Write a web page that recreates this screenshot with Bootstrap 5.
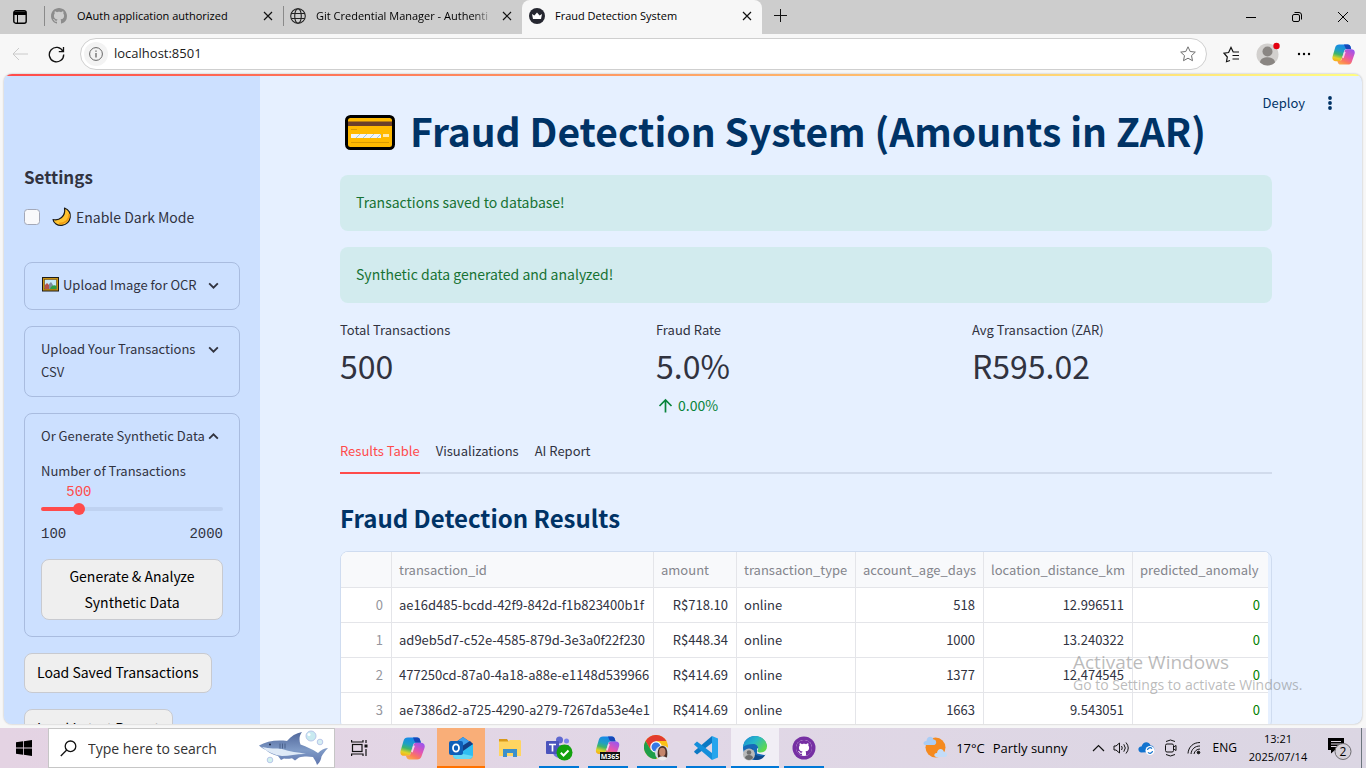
<!DOCTYPE html>
<html lang="en">
<head>
<meta charset="utf-8">
<meta name="viewport" content="width=device-width, initial-scale=1">
<title>Fraud Detection System</title>
<link href="https://cdn.jsdelivr.net/npm/bootstrap@5.3.0/dist/css/bootstrap.min.css" rel="stylesheet">
<style>
  :root { --ui: "Open Sans", "Noto Sans", sans-serif; --app: "Noto Sans CJK SC", sans-serif; --ink: #31333f; --navy: #003366; --coral: #ff4b4b; }
  body { font-family: var(--ui); background: #f7f7f7; color: #000; }
  button { font-family: inherit; }
  .plain-btn { border: 0; background: none; padding: 0; color: inherit; display: inline-flex; align-items: center; justify-content: center; }
  svg { display: block; flex: none; }

  /* browser tabs */
  .tab-strip { height: 34px; background: #cdcdcd; font-size: 11px; line-height: 32px; }
  .tab-menu { width: 44px; padding-right: 4px; }
  .browser-tab { width: 239px; height: 32px; padding: 0 10px 0 7px; }
  .browser-tab .tab-title { flex: 1; overflow: hidden; white-space: nowrap; margin-left: 10px; }
  .tab-fade { -webkit-mask-image: linear-gradient(90deg, #000 88%, transparent); mask-image: linear-gradient(90deg, #000 88%, transparent); }
  .tab-idle { background: linear-gradient(#8a8a8a, #8a8a8a) left center / 1px 20px no-repeat; }
  .tab-current { width: 240px; height: 34px; background: #f7f7f7; border-radius: 8px 8px 0 0; padding-bottom: 2px; }
  .win-btn { width: 46px; height: 34px; }

  /* address bar */
  .tool-row { height: 40px; padding: 0 11px 0 2px; }
  .nav-btn { width: 36px; height: 36px; }
  .url-box { height: 32px; border: 1px solid #cfcfcf; border-radius: 16px; background: #fff; padding: 0 10px 0 3px; margin-left: 6px; }
  .url-info { width: 24px; height: 24px; border-radius: 50%; background: #f3f3f3; }
  .url-box input { border: 0; outline: 0; font-size: 13px; color: #1b1b1b; background: none; min-width: 0; padding: 0 0 0 6px; }

  /* page frame */
  .page-frame { margin: 0 4px 4px; border-radius: 8px; overflow: hidden; background: #e6f0ff; font-family: var(--app); color: var(--ink); font-size: 14px; line-height: 24px; box-shadow: 0 0 2px #aaa; min-height: 0; }
  .rainbow { height: 2px; background: linear-gradient(90deg, #ff4b4b, #fffd80); }
  .page-cols { min-height: 0; }
  .side { width: 256px; background: #cce0ff; padding: 89px 20px 0; overflow: hidden; }
  .side h2 { font-size: 17px; line-height: 24px; font-weight: 700; margin: 0 0 16px; }
  .dark-row { margin-bottom: 33px; }
  .dark-check { width: 16px; height: 16px; margin: 0; border: 1px solid #a3a8b8; border-radius: 4px; background-color: #f9f9fb; flex: none; }
  .expander { border: 1px solid #a9bcdf; border-radius: 8px; padding: 10px 16px 13px; margin-bottom: 16px; font-size: 13px; line-height: 23px; }
  .expander-head { width: 100%; text-align: left; display: flex; justify-content: space-between; align-items: flex-start; line-height: 23px; white-space: nowrap; }
  .expander-head > svg { margin: 6px 3px 0 0; }
  .mono { font-family: "Liberation Mono", monospace; font-size: 14px; }
  .val-box { height: 20px; line-height: 20px; color: var(--coral); }
  .val-box output { display: block; width: 26px; margin-left: -13px; }
  .slider-bar { height: 4px; border-radius: 2px; margin: 5px 0 4px; display: flex; align-items: center; }
  .slider-bar input { -webkit-appearance: none; appearance: none; flex: none; width: calc(100% + 12px); margin: 0 -6px; background: none; height: 12px; }
  .slider-bar input::-webkit-slider-thumb { -webkit-appearance: none; width: 12px; height: 12px; border-radius: 50%; background: var(--coral); }
  .slider-bar input::-moz-range-thumb { width: 12px; height: 12px; border: 0; background: var(--coral); }
  .grey-btn { background: #efefef; border: 1px solid #c8cad0; border-radius: 8px; color: #000; font-size: 14px; line-height: 26px; padding: 5px 12px 7px; font-family: var(--app); white-space: nowrap; }
  .grey-btn:hover { background: #e6e6e6; }
  .grey-btn.two-line { padding: 3px 12px 4px; margin-top: 13px; }

  /* main column */
  .app-main { padding: 28px 90px 0 80px; min-width: 0; position: relative; overflow: hidden; }
  .app-tools { position: absolute; right: 25px; top: 15px; color: var(--navy); font-size: 13px; gap: 18px; }
  .app-main h1 { font-size: 39px; line-height: 53px; font-weight: 700; color: var(--navy); margin: 0 0 18px; gap: 11px; padding-left: 5px; white-space: nowrap; }
  .ok-note { background: #d2ebee; color: #177233; border: 0; border-radius: 8px; padding: 15px 16px 17px; margin: 0 0 16px; }
  .metric-row { margin: -1px 0 15px; min-height: 101px; --bs-gutter-x: 16px; margin-left: -8px; margin-right: -8px; }
  .metric-label { font-size: 13px; line-height: 23px; }
  .metric-value { font-size: 32px; line-height: 48px; }
  .metric-delta { font-size: 14px; line-height: 27px; margin-top: 3px; color: #09843b; }
  .tab-line { border-bottom: 2px solid #d1dbec; gap: 16px; font-size: 13px; }
  .tab-line .nav-link { padding: 0 0 4px; line-height: 34px; color: var(--ink); border-bottom: 2px solid transparent; margin-bottom: -2px; }
  .tab-line .nav-link.active { color: var(--coral); border-color: var(--coral); }
  .app-main h3 { font-size: 24px; line-height: 34px; font-weight: 700; color: var(--navy); margin: 27px 0 16px; }
  .grid-box { border: 1px solid #cfdcf0; border-radius: 8px; overflow: hidden; }
  .grid-data { width: 927px; table-layout: fixed; border-collapse: separate; border-spacing: 0; font-size: 13px; background: #fff; color: var(--ink); white-space: nowrap; }
  .grid-data th, .grid-data td { height: 35px; padding: 0 8px 0 7px; line-height: 34px; border-bottom: 1px solid #e4e5e9; border-right: 1px solid #e4e5e9; font-weight: 400; }
  .grid-data td:nth-child(2) { padding-right: 0; }
  .grid-data thead th { background: #f8f9fb; color: #84858c; height: 36px; line-height: 35px; padding-right: 0; }
  .grid-data tbody th { color: #95969d; text-align: right; }
  .grid-data tr > :last-child { border-right: 0; }
  .grid-data .clean { color: #008000; }
  .watermark { position: absolute; right: 53px; bottom: 29px; width: 236px; font-family: var(--ui); color: rgba(120,120,120,.5); font-size: 14px; line-height: 20px; white-space: nowrap; pointer-events: none; }
  .watermark strong { display: block; font-weight: 400; font-size: 19px; line-height: 26px; }

  /* taskbar */
  .task-bar { height: 40px; background: linear-gradient(90deg, #e4d3e3, #e1d7e6 50%, #dbd6e3); }
  .task-btn { width: 48px; height: 40px; border-bottom: 2px solid transparent; padding-top: 2px; }
  .task-group { gap: 1px; }
  .run { background: linear-gradient(#0078d7, #0078d7) center bottom / 40px 2px no-repeat; background-origin: border-box; }
  .alerting { background: #f9ae78; border-color: #ff7200; }
  .foreground { background: #f1eef5; border-color: #0078d7; }
  .search-box { width: 287px; height: 40px; background: #fff; border: 1px solid #c6c6c6; padding: 0 4px 0 11px; }
  .search-box input { border: 0; outline: 0; background: none; font-size: 14px; min-width: 0; padding: 0 0 0 11px; }
  .search-box input::placeholder { color: #333; opacity: 1; }
  .tray { font-size: 13px; line-height: 16px; }
  .lang { font-size: 12px; }
  .clock { font-size: 11px; line-height: 18px; text-align: center; width: 66px; }
</style>
</head>
<body class="vh-100 overflow-hidden d-flex flex-column">

<!-- shared symbols -->
<svg width="0" height="0" class="position-absolute" aria-hidden="true">
  <defs>
    <linearGradient id="cpA" x1=".6" y1="0" x2=".3" y2="1"><stop offset="0" stop-color="#1686ee"/><stop offset=".4" stop-color="#1f9fc4"/><stop offset=".62" stop-color="#3fb56b"/><stop offset=".85" stop-color="#e3d327"/><stop offset="1" stop-color="#f6b21c"/></linearGradient>
    <linearGradient id="cpB" x1=".8" y1="0" x2=".2" y2="1"><stop offset="0" stop-color="#9a55ee"/><stop offset=".45" stop-color="#e455b0"/><stop offset=".75" stop-color="#fb7a5c"/><stop offset="1" stop-color="#fbab48"/></linearGradient>
    <symbol id="copilot" viewBox="0 0 24 24">
      <path d="M7.500 1.500h9c1.500 0 2.300.8 2.700 2l.9 3H15c-1.300 0-2 .8-2.400 2L10 17c-.5 1.500-1.300 2-2.700 2H4C1.300 19-.2 17.300.6 14.200L3.400 4.500C4.100 2.500 5.200 1.500 7.500 1.500z" fill="url(#cpA)"/>
      <path d="M12.500 1.500h4c1.500 0 2.300.8 2.700 2l.9 3h-4c-1.300 0-2-.8-2.400-2z" fill="#1747b8"/>
      <path d="M16.500 22.500H9c-1.600 0-2.500-1-3-2.500l-.4-1.300h2.300c1.300 0 2-.8 2.400-2L13 8.800c.5-1.500 1.200-2.300 2.600-2.300H20c2.900 0 4.400 1.900 3.500 5l-2.900 8.200c-.7 1.900-2 2.800-4.100 2.800z" fill="url(#cpB)"/>
      <path d="M10.800 15l2-6 1.500.3-2.200 6.500z" fill="#fff" opacity=".75"/>
    </symbol>
    <symbol id="cat" viewBox="0 0 16 16"><path d="M8 0C3.580 0 0 3.580 0 8c0 3.540 2.290 6.530 5.470 7.590.4.070.55-.17.55-.38 0-.19-.01-.82-.01-1.490-2.010.37-2.530-.49-2.690-.94-.09-.23-.48-.94-.82-1.130-.28-.15-.68-.52-.01-.53.63-.01 1.080.58 1.230.82.72 1.210 1.870.87 2.330.66.07-.52.28-.87.51-1.070-1.780-.2-3.640-.89-3.640-3.950 0-.87.31-1.590.82-2.150-.08-.2-.36-1.020.08-2.120 0 0 .67-.21 2.200.82.64-.18 1.320-.27 2-.27s1.360.09 2 .27c1.530-1.040 2.200-.82 2.200-.82.44 1.100.16 1.920.08 2.120.51.56.82 1.270.82 2.150 0 3.070-1.870 3.750-3.650 3.950.29.25.54.73.54 1.480 0 1.070-.01 1.930-.01 2.200 0 .21.15.46.55.38A8.010 8.010 0 0 0 16 8c0-4.420-3.580-8-8-8z"/></symbol>
    <symbol id="cross" viewBox="0 0 10 10"><path d="M1 1l8 8M9 1L1 9" stroke="#111" stroke-width="1.200" fill="none"/></symbol>
    <symbol id="chev" viewBox="0 0 12 12"><path d="M2 4l4 4 4-4" fill="none" stroke="#31333f" stroke-width="1.700"/></symbol>
  </defs>
</svg>

<header>
  <div class="tab-strip d-flex">
    <button class="plain-btn tab-menu" aria-label="Tab actions"><svg width="14" height="14" viewBox="0 0 14 14"><rect x=".8" y=".8" width="12.400" height="12.400" rx="2" fill="none" stroke="#000" stroke-width="1.400"/><path d="M1 1.500h12V5H1z"/><path d="M4.500 4v9" stroke="#000"/></svg></button>
    <div class="browser-tab tab-idle d-flex align-items-center">
      <svg width="16" height="16" fill="#8c8c8c"><use href="#cat"/></svg>
      <span class="tab-title">OAuth application authorized</span>
      <button class="plain-btn" aria-label="Close tab"><svg width="10" height="10"><use href="#cross"/></svg></button>
    </div>
    <div class="browser-tab tab-idle d-flex align-items-center">
      <svg width="16" height="16" viewBox="0 0 16 16" fill="none" stroke="#222" stroke-width="1.100"><circle cx="8" cy="8" r="7.300"/><ellipse cx="8" cy="8" rx="3.300" ry="7.300"/><path d="M1.300 5.500h13.400M1.300 10.500h13.400"/></svg>
      <span class="tab-title tab-fade">Git Credential Manager - Authenti</span>
      <button class="plain-btn ms-2" aria-label="Close tab"><svg width="10" height="10"><use href="#cross"/></svg></button>
    </div>
    <div class="browser-tab tab-current d-flex align-items-center">
      <svg width="16" height="16" viewBox="0 0 16 16"><circle cx="8" cy="8" r="8" fill="#262730"/><path d="M3 6l2.400 1.500L8 4.500l2.600 3L13 6l-1 5H4z" fill="#fff"/></svg>
      <span class="tab-title">Fraud Detection System</span>
      <button class="plain-btn" aria-label="Close tab"><svg width="10" height="10"><use href="#cross"/></svg></button>
    </div>
    <button class="plain-btn px-2 ms-1 pb-1" aria-label="New tab"><svg width="13" height="13" viewBox="0 0 13 13" stroke="#111"><path d="M6.500 0v13M0 6.500h13"/></svg></button>
    <div class="ms-auto d-flex">
      <button class="plain-btn win-btn" aria-label="Minimize"><svg width="10" height="10" viewBox="0 0 10 10" stroke="#000"><path d="M0 5.500h10"/></svg></button>
      <button class="plain-btn win-btn" aria-label="Restore"><svg width="10" height="10" viewBox="0 0 10 10" fill="none" stroke="#000"><rect x=".5" y="2.500" width="7" height="7" rx="1.500"/><path d="M2.500.5H7a2.500 2.500 0 0 1 2.500 2.500v4.500"/></svg></button>
      <button class="plain-btn win-btn" aria-label="Close"><svg width="10" height="10" viewBox="0 0 10 10" stroke="#000"><path d="M0 0l10 10M10 0L0 10"/></svg></button>
    </div>
  </div>

  <div class="tool-row d-flex align-items-center">
    <button class="plain-btn nav-btn" aria-label="Back" disabled><svg width="16" height="14" viewBox="0 0 16 14" fill="none" stroke="#cacaca"><path d="M16 7H1M7 1L1 7l6 6"/></svg></button>
    <button class="plain-btn nav-btn" aria-label="Reload"><svg width="17" height="17" viewBox="0 0 17 17" fill="none" stroke="#111" stroke-width="1.300"><path d="M15 5.500A7.200 7.200 0 1 0 15.700 8.500M15.500 1v4.700h-4.700"/></svg></button>
    <div class="url-box flex-grow-1 d-flex align-items-center">
      <span class="url-info d-flex align-items-center justify-content-center"><svg width="14" height="14" viewBox="0 0 14 14" fill="none" stroke="#666"><circle cx="7" cy="7" r="6.400"/><path d="M7 6v4.500M7 3.500v1.300" stroke-width="1.300"/></svg></span>
      <input class="flex-grow-1" type="text" value="localhost:8501" aria-label="Address">
      <button class="plain-btn" aria-label="Add to favorites"><svg width="16" height="16" viewBox="0 0 16 16" fill="none" stroke="#707070"><path d="M8 .8l2.200 4.700 5.100.6-3.800 3.500 1 5.100L8 12.200l-4.500 2.500 1-5.100L.7 6.100l5.100-.6z" stroke-linejoin="round"/></svg></button>
    </div>
    <div class="d-flex align-items-center">
      <button class="plain-btn ms-3" aria-label="Favorites"><svg width="17" height="17" viewBox="0 0 17 17" fill="none" stroke="#111" stroke-width="1.200"><path d="M7 14.500l-3.500 1.200.8-4.700L1 7.200l4.600-.7L8 1.500l2.200 4.500H16M9.500 9.500H16M9.500 13H16"/></svg></button>
      <button class="plain-btn ms-3" aria-label="Profile"><svg width="24" height="24" viewBox="0 0 24 24"><circle cx="11.500" cy="12.500" r="11" fill="#d2d0ce"/><circle cx="11.500" cy="9.500" r="5" fill="#8a8683"/><path d="M4 20.500c0-7 15-7 15 0a11 11 0 0 1-15 0z" fill="#8a8683"/><circle cx="20.500" cy="4" r="3.200" fill="#e3000f"/></svg></button>
      <button class="plain-btn ms-3" aria-label="More"><svg width="16" height="4" viewBox="0 0 16 4"><circle cx="3" cy="2" r="1.200"/><circle cx="8" cy="2" r="1.200"/><circle cx="13" cy="2" r="1.200"/></svg></button>
      <button class="plain-btn ms-3 ps-1" aria-label="Copilot"><svg width="23" height="23"><use href="#copilot"/></svg></button>
    </div>
  </div>
</header>

<div class="page-frame flex-grow-1 d-flex flex-column position-relative">
  <div class="rainbow flex-shrink-0"></div>
  <div class="page-cols d-flex flex-grow-1">
    <aside class="side flex-shrink-0">
      <h2>Settings</h2>
      <div class="dark-row d-flex align-items-center">
        <input class="form-check-input dark-check" type="checkbox" id="dark">
        <label class="d-flex align-items-center ms-2 ps-1 gap-1" for="dark">
          <svg width="20" height="20" viewBox="0 0 20 20"><path d="M12.500 1c9 4 7 15.500-2.500 17.300C5.500 19 1.500 16 1 12.500c6 1.500 13-3 11.500-11.500z" fill="#ffc32e" stroke="#1a1a1a" stroke-width="1.200" stroke-linejoin="round"/><path d="M17 7c.5 6-4 9.500-10 9.500" stroke="#f09a12" stroke-width="1.500" fill="none"/></svg>
          Enable Dark Mode</label>
      </div>
      <div class="expander">
        <button class="plain-btn expander-head" aria-expanded="false"><span class="d-flex align-items-center"><svg class="me-1" width="18" height="15" viewBox="-1 0 18 15"><rect x=".5" y=".5" width="16" height="13.500" fill="#c89211" stroke="#1b1b1b"/><rect x="2.500" y="2.500" width="12" height="9.500" fill="#c7e9fb" stroke="#6d4b12" stroke-width=".6"/><path d="M3 12V8l2-2 2 2v4z" fill="#b5524c"/><path d="M7 12V7l2-2 2 3v4z" fill="#7b8fa0"/><path d="M8 12c1-3 4-5 6.500-3v3z" fill="#2f9e44"/></svg>Upload Image for OCR</span><svg width="13" height="13"><use href="#chev"/></svg></button>
      </div>
      <div class="expander">
        <button class="plain-btn expander-head" aria-expanded="false"><span>Upload Your Transactions<br>CSV</span><svg width="13" height="13"><use href="#chev"/></svg></button>
      </div>
      <div class="expander pb-3">
        <button class="plain-btn expander-head" aria-expanded="true"><span>Or Generate Synthetic Data</span><svg width="13" height="13" viewBox="0 0 12 12"><path d="M2 8l4-4 4 4" fill="none" stroke="#31333f" stroke-width="1.700"/></svg></button>
        <label class="d-block mt-2 pt-1" for="count">Number of Transactions</label>
        <div class="mono val-box"><div style="padding-left:21.050%"><output for="count">500</output></div></div>
        <div class="slider-bar" style="background:linear-gradient(90deg,#ff4b4b 21.050%,#bfd2f1 21.050%)"><input id="count" type="range" min="100" max="2000" value="500"></div>
        <div class="mono d-flex justify-content-between mt-2 pt-1"><span>100</span><span>2000</span></div>
        <button class="grey-btn two-line w-100">Generate &amp; Analyze<br>Synthetic Data</button>
      </div>
      <button class="grey-btn d-block mb-3">Load Saved Transactions</button>
      <button class="grey-btn d-block">Load Latest Report</button>
    </aside>

    <main class="app-main flex-grow-1">
      <div class="app-tools d-flex align-items-center">
        <button class="plain-btn">Deploy</button>
        <button class="plain-btn" aria-label="Menu"><svg width="14" height="14" viewBox="0 0 14 14" fill="#003366"><circle cx="7" cy="2" r="1.900"/><circle cx="7" cy="7" r="1.900"/><circle cx="7" cy="12" r="1.900"/></svg></button>
      </div>
      <h1 class="d-flex align-items-center">
        <svg class="mt-1" width="50" height="35" viewBox="0 0 50 35"><rect x="1.500" y="1.500" width="47" height="32" rx="4" fill="#ffb900" stroke="#000" stroke-width="3"/><path d="M3 6.500h44v4.500H3z" fill="#6b3f2b"/><path d="M6 14.500h6M6 27.500h38" stroke="#d99a00"/><path d="M6 19h30v4H6z" fill="#f4f4f4"/><path d="M11 23l4-4M18 23l4-4M25 23l4-4M32 23l4-4" stroke="#9fc9e8"/><path d="M38 19h6v3h-6z" fill="#ffe9b0"/></svg>
        <span class="ms-1">Fraud Detection System (Amounts in ZAR)</span>
      </h1>
      <div class="alert ok-note" role="alert">Transactions saved to database!</div>
      <div class="alert ok-note" role="alert">Synthetic data generated and analyzed!</div>
      <div class="row metric-row">
        <div class="col-4"><div class="metric-label">Total Transactions</div><div class="metric-value">500</div></div>
        <div class="col-4"><div class="metric-label">Fraud Rate</div><div class="metric-value">5.0%</div>
          <div class="metric-delta d-flex align-items-center"><svg class="me-1" width="18" height="18" viewBox="0 0 18 18" fill="none" stroke="#09843b" stroke-width="1.700"><path d="M9.500 15.500V3.500M3.500 9l6-6 6 6"/></svg>0.00%</div></div>
        <div class="col-4"><div class="metric-label">Avg Transaction (ZAR)</div><div class="metric-value">R595.02</div></div>
      </div>
      <nav class="nav tab-line">
        <a class="nav-link active" href="#results">Results Table</a>
        <a class="nav-link" href="#visuals">Visualizations</a>
        <a class="nav-link" href="#ai">AI Report</a>
      </nav>
      <h3 id="results">Fraud Detection Results</h3>
      <div class="grid-box">
        <table class="grid-data">
          <colgroup><col style="width:51px"><col style="width:262px"><col style="width:83px"><col style="width:119px"><col style="width:128px"><col style="width:149px"><col style="width:135px"></colgroup>
          <thead><tr><th></th><th>transaction_id</th><th>amount</th><th>transaction_type</th><th>account_age_days</th><th>location_distance_km</th><th>predicted_anomaly</th></tr></thead>
          <tbody>
            <tr><th>0</th><td>ae16d485-bcdd-42f9-842d-f1b823400b1f</td><td class="text-end">R$718.10</td><td>online</td><td class="text-end">518</td><td class="text-end">12.996511</td><td class="text-end clean">0</td></tr>
            <tr><th>1</th><td>ad9eb5d7-c52e-4585-879d-3e3a0f22f230</td><td class="text-end">R$448.34</td><td>online</td><td class="text-end">1000</td><td class="text-end">13.240322</td><td class="text-end clean">0</td></tr>
            <tr><th>2</th><td>477250cd-87a0-4a18-a88e-e1148d539966</td><td class="text-end">R$414.69</td><td>online</td><td class="text-end">1377</td><td class="text-end">12.474545</td><td class="text-end clean">0</td></tr>
            <tr><th>3</th><td>ae7386d2-a725-4290-a279-7267da53e4e1</td><td class="text-end">R$414.69</td><td>online</td><td class="text-end">1663</td><td class="text-end">9.543051</td><td class="text-end clean">0</td></tr>
          </tbody>
        </table>
      </div>
    </main>
  </div>
  <div class="watermark"><strong>Activate Windows</strong>Go to Settings to activate Windows.</div>
</div>

<footer class="task-bar d-flex flex-shrink-0 align-items-stretch">
  <button class="plain-btn task-btn" aria-label="Start"><svg width="16" height="16" viewBox="0 0 16 16"><path d="M0 2.300L7 1.300V7.600H0zM7.800 1.200L16 0v7.600H7.800zM0 8.400h7v6.300L0 13.700zM7.800 8.400H16V16l-8.200-1.200z"/></svg></button>
  <div class="search-box d-flex align-items-center">
    <svg width="17" height="17" viewBox="0 0 17 17" fill="none" stroke="#111" stroke-width="1.300"><circle cx="10.500" cy="6.300" r="5.300"/><path d="M6.700 10L.8 16"/></svg>
    <input class="flex-grow-1" type="text" placeholder="Type here to search" aria-label="Search">
    <svg width="72" height="38" viewBox="0 0 72 38"><defs><linearGradient id="shk" x1="0" y1="0" x2="0" y2="1"><stop offset="0" stop-color="#50679b"/><stop offset=".55" stop-color="#7f9ac6"/><stop offset="1" stop-color="#5f76ae"/></linearGradient></defs>
      <circle cx="53" cy="7" r="5" fill="#c8eaf0" stroke="#b9c7ea"/><circle cx="62" cy="13" r="2.800" fill="#d6eef3" stroke="#b9c7ea"/><circle cx="12" cy="31" r="2.800" fill="#d2f1ee" stroke="#b9c7ea"/><circle cx="51" cy="5.500" r="1.500" fill="#fff"/>
      <path d="M1 16.500C8 12.500 18 10.500 29 12c4-5 9-8 15-9-3 4-3 8-1.500 12.500C49 18 54 20 60 24c3-3 6-4.500 10-5-3 3-5 6-6.500 8.500-.5 4-2 6-4.500 8.500-1-4-3-6-4-8-6-1-10-.5-14 .5l-4 3-3-2.300c-3 .6-6 .6-8 .3L23 31l-3-4C13 25 10 23 8 21c-2-1-5-2.500-7-4.500z" fill="url(#shk)"/>
      <path d="M4 18c8 2 14 1 20 2 8 3 16 3 24 5-8-.5-16 2-24 2-8-1-14-4-20-9z" fill="#dfeaf7"/><circle cx="12" cy="15.500" r="1" fill="#1d2947"/><path d="M22 14.500v5M24.500 14.500v5M27 14.500v5" stroke="#40567f" stroke-width=".8"/></svg>
  </div>
  <div class="task-group d-flex">
    <button class="plain-btn task-btn" aria-label="Task View"><svg width="17" height="16" viewBox="0 0 17 16" fill="none" stroke="#111" stroke-width="1.200"><rect x="1.500" y="4.500" width="9.500" height="7"/><path d="M.6 0v2H12V0M.6 16v-2H12v2M15 0v3M15 9v7"/><path d="M13.500 4.500h3v3h-3z" fill="#111" stroke="none"/></svg></button>
    <button class="plain-btn task-btn ms-1" aria-label="Copilot"><svg width="25" height="25"><use href="#copilot"/></svg></button>
    <button class="plain-btn task-btn alerting" aria-label="Outlook"><svg width="25" height="24" viewBox="0 0 25 24"><path d="M4 8l10-7 10 7v3H4z" fill="#1663b0"/><path d="M4 9l10-8 7 5-9 10H4z" fill="#3fa0ee"/><path d="M14 13l10-5v11c0 2.500-1.500 4-4 4H8c-2 0-4-1.500-4-4v-3z" fill="#2fbdf2"/><path d="M13 10l8-5 3 3-10 7z" fill="#123f87"/><path d="M4 16l20 4c-1 1.500-2.500 3-4 3H8c-2 0-4-1.500-4-4z" fill="#67d9f4"/><rect y="5" width="14" height="14" rx="2" fill="#0f5fb8"/><ellipse cx="7" cy="12" rx="3" ry="3.700" fill="none" stroke="#fff" stroke-width="1.800"/></svg></button>
    <button class="plain-btn task-btn" aria-label="File Explorer"><svg width="22" height="20" viewBox="0 0 22 20"><path d="M0 1h8l2 3H0z" fill="#d99a1a"/><path d="M0 3.500h9l2-1.500h9.500c1 0 1.500.5 1.500 1.500V18H0z" fill="#ffd561"/><path d="M4 19v-8h14v8h-4v-4H8v4z" fill="#3c8fcb"/></svg></button>
    <button class="plain-btn task-btn run" aria-label="Teams"><svg width="27" height="25" viewBox="0 0 27 25"><circle cx="13.500" cy="4" r="3.500" fill="#5f68cf"/><circle cx="20.500" cy="5" r="2.500" fill="#7b83eb"/><path d="M7 9h16v8c0 6-14 8-16 0z" fill="#6f78de"/><rect y="5" width="13" height="13" rx="1" fill="#4b53bc"/><path d="M3 8.500h7M6.500 8.500v7" stroke="#fff" stroke-width="1.700"/><circle cx="18.500" cy="16.500" r="8" fill="#13a10e"/><path d="M14.800 16.800l2.700 2.700 5-5" fill="none" stroke="#fff" stroke-width="2"/></svg></button>
    <button class="plain-btn task-btn run" aria-label="Microsoft 365"><svg width="26" height="26" viewBox="0 0 26 26" font-family="Open Sans, sans-serif"><use href="#copilot" width="25" height="24"/><rect x="5" y="17" width="20" height="8" fill="#111"/><text x="15" y="24" font-size="7" font-weight="700" fill="#fff" text-anchor="middle">M365</text></svg></button>
    <button class="plain-btn task-btn run" aria-label="Chrome"><svg width="26" height="26" viewBox="0 0 26 26"><circle cx="12" cy="12" r="12" fill="#fbc116"/><path d="M12 6h10.400A12 12 0 0 0 1.600 6l5.200 9z" fill="#e33b2e"/><path d="M1.600 6A12 12 0 0 0 12 24l5.200-9H6.800z" fill="#1e9e4a"/><circle cx="12" cy="12" r="5.800" fill="#fff"/><circle cx="12" cy="12" r="4.500" fill="#3578e5"/><circle cx="18.500" cy="18" r="7.500" fill="#d9dde4"/><path d="M14 22c-1-5 0-11 4.500-11s5.500 6 4.500 11c-3 3-6 3-9 0z" fill="#4a3129"/><ellipse cx="18.300" cy="17" rx="3.200" ry="4.300" fill="#c4876b"/><path d="M14 23.500c2-3 7-3 9 0-2.500 2.500-6.500 2.500-9 0z" fill="#eee"/></svg></button>
    <button class="plain-btn task-btn run" aria-label="Visual Studio Code"><svg width="24" height="24" viewBox="0 0 24 24"><path d="M18 0l6 2.500v19L18 24z" fill="#26a5ed"/><path d="M18 0v7L3 18.500.5 16.300q-.6-.7 0-1.300z" fill="#0b79c4"/><path d="M18 24v-7L3 5.500.5 7.700q-.6.700 0 1.300z" fill="#148fdb"/></svg></button>
    <button class="plain-btn task-btn foreground" aria-label="Edge"><svg width="25" height="25" viewBox="0 0 25 25"><defs><linearGradient id="edg" x1="0" y1="0" x2="1" y2=".6"><stop offset="0" stop-color="#1689d6"/><stop offset=".5" stop-color="#27b8c9"/><stop offset="1" stop-color="#5fd850"/></linearGradient></defs><circle cx="12" cy="12" r="12" fill="#1669b8"/><path d="M14 12.500l11-2v6l-2 3-9-2z" fill="#f1eef5"/><path d="M0 11C1 4 6 0 12 0c7 0 12 5 12 10.500 0 4-3 6-6.500 6-2.500 0-3.500-1-3-2 2-3-.5-6.500-4.500-6.500-4 0-8 1-10 3z" fill="url(#edg)"/><path d="M9.500 12c-1 5 3 8 8.500 8 2 0 3.500-.5 4.500-1.500-3 6-10 7-14.500 3.500-3-3-2-8 1.500-10z" fill="#114a8b"/><circle cx="6" cy="18.500" r="6" fill="#b9b9b9"/><circle cx="6" cy="16.500" r="2.300" fill="#6d6d6d"/><path d="M2 22c0-4 8-4 8 0-2 2.500-6 2.500-8 0z" fill="#6d6d6d"/></svg></button>
    <button class="plain-btn task-btn run" aria-label="GitHub Desktop"><svg width="24" height="24" viewBox="0 0 24 24"><circle cx="12" cy="12" r="11.500" fill="#762fa3"/><circle cx="12" cy="12" r="8" fill="#fff"/><svg x="4" y="4" width="16" height="16" fill="#762fa3"><use href="#cat"/></svg></svg></button>
  </div>
  <div class="tray d-flex align-items-center ms-auto">
    <svg width="25" height="24" viewBox="0 0 25 24"><circle cx="12.500" cy="11.500" r="10" fill="#f58a1f"/><path d="M2 9c-3-1-1-4.500 1.500-4C4-1 10 0 10.500 3.500 14 3.500 14 8.500 11 9z" fill="#a9cdf6"/><path d="M13 21c-3-1-1.500-4.500 1-4 .5-5 6-5 7-1 4 0 4 5 1 5z" fill="#c3dcf8"/></svg>
    <span class="ms-2">17°C</span><span class="ms-2">Partly sunny</span>
    <button class="plain-btn ms-4" aria-label="Hidden icons"><svg width="13" height="8" viewBox="0 0 13 8" fill="none" stroke="#111" stroke-width="1.200"><path d="M1 7l5.500-5.500L12 7"/></svg></button>
    <svg class="ms-2" width="17" height="14" viewBox="0 0 17 14" fill="none" stroke="#111"><path d="M1 5v4h2l3.500 3V2L3 5zM8.500 5q1.500 2 0 4M10.800 3.300q3 3.700 0 7.400M13 1.500q4.500 5.500 0 11"/></svg>
    <svg class="ms-2" width="17" height="14" viewBox="0 0 17 14"><path d="M3 11.500c-4-1-3-6.500.5-6C5 0 11 0 12.500 4.500c4 0 4.500 4 3 6.500z" fill="#1273cf"/><circle cx="12" cy="9.500" r="4.500" fill="#fff"/><path d="M9.500 9a2.600 2.600 0 0 1 4.500-1.400M14.500 10a2.600 2.600 0 0 1-4.500 1.400" fill="none" stroke="#1273cf" stroke-width="1.200"/></svg>
    <svg class="ms-2" width="16" height="18" viewBox="0 0 16 18" fill="none" stroke="#111"><rect x="2.500" y="5" width="8" height="8" rx="1.500"/><path d="M10.500 8l2.500-1.500v5L10.500 10M3 2.500q4.500-3 9 0M3 15.500q4.500 3 9 0"/></svg>
    <svg class="ms-2" width="14" height="14" viewBox="0 0 14 14" fill="none" stroke="#111"><path d="M1 12.500C1.500 6 6 1.500 13 1.500M4 13c.5-5 4-8 9-8M7 13c.5-3 3-5 6-5"/><circle cx="11.500" cy="11.500" r="1.300" fill="#111"/></svg>
    <span class="lang ms-2 ps-1">ENG</span>
    <div class="clock ms-2">13:21<br>2025/07/14</div>
    <button class="plain-btn ms-3" aria-label="Notifications"><svg width="26" height="24" viewBox="0 0 26 24" font-family="Open Sans, sans-serif"><path d="M1 2h16v12H8l-4 3.500V14H1z"/><path d="M4 5.500h10M4 8h10M4 10.500h7" stroke="#ddd6e4"/><circle cx="16" cy="15.500" r="8" fill="#d5d1da" stroke="#6d6b70"/><text x="16" y="20" font-size="12" text-anchor="middle">2</text></svg></button>
    <span class="border-start border-secondary align-self-stretch ms-2 me-1"></span>
  </div>
</footer>

<script src="https://cdn.jsdelivr.net/npm/bootstrap@5.3.0/dist/js/bootstrap.bundle.min.js"></script>
</body>
</html>
